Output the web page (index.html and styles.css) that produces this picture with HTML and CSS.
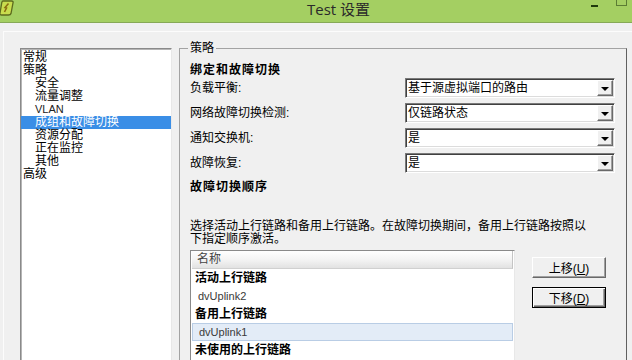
FILE: index.html
```html
<!DOCTYPE html>
<html lang="zh-CN">
<head>
    <meta charset="UTF-8">
    <meta name="viewport" content="width=device-width, initial-scale=1.0">
    <title>Test 设置</title>
    <link rel="stylesheet" href="styles.css">
</head>
<body>
    <div class="titlebar">
        <svg class="app-icon" width="14" height="16" viewBox="0 0 14 16">
            <path d="M3 1 L11.5 1 Q13.5 1 13 3 L11 13.5 Q10.5 15 8.5 15 L1.5 15 Q-0.5 15 0 13 L1.8 2.5 Q2.2 1 3 1 Z" fill="#c9dc4e" stroke="#5d6b1e" stroke-width="1.3"/>
            <path d="M4.5 12 L6.5 8 L5 7.5 L8.5 3.5" fill="none" stroke="#8a6d12" stroke-width="1.6"/>
        </svg>
        <div class="title">Test 设置</div>
        <div class="win-buttons">
            <span class="btn-min"></span>
            <span class="btn-max"></span>
        </div>
    </div>

    <div class="frame">
        <div class="content">
            <ul class="tree">
                <li>常规</li>
                <li>策略</li>
                <li class="child">安全</li>
                <li class="child">流量调整</li>
                <li class="child latin">VLAN</li>
                <li class="child selected">成组和故障切换</li>
                <li class="child">资源分配</li>
                <li class="child">正在监控</li>
                <li class="child">其他</li>
                <li>高级</li>
            </ul>

            <fieldset class="group">
                <legend>策略</legend>
                <div class="heading">绑定和故障切换</div>

                <div class="form-grid">
                    <label>负载平衡:</label>
                    <div class="combo"><span class="combo-text">基于源虚拟端口的路由</span><span class="combo-btn"></span></div>

                    <label>网络故障切换检测:</label>
                    <div class="combo"><span class="combo-text">仅链路状态</span><span class="combo-btn"></span></div>

                    <label>通知交换机:</label>
                    <div class="combo"><span class="combo-text">是</span><span class="combo-btn"></span></div>

                    <label>故障恢复:</label>
                    <div class="combo"><span class="combo-text">是</span><span class="combo-btn"></span></div>
                </div>

                <div class="heading order-heading">故障切换顺序</div>
                <p class="desc">选择活动上行链路和备用上行链路。在故障切换期间，备用上行链路按照以<br>下指定顺序激活。</p>

                <div class="order-row">
                    <div class="listview">
                        <div class="lv-header">名称</div>
                        <div class="lv-group">活动上行链路</div>
                        <div class="lv-item">dvUplink2</div>
                        <div class="lv-group">备用上行链路</div>
                        <div class="lv-item selected">dvUplink1</div>
                        <div class="lv-group">未使用的上行链路</div>
                    </div>
                    <div class="side-buttons">
                        <button>上移(<u>U</u>)</button>
                        <button class="default">下移(<u>D</u>)</button>
                    </div>
                </div>
            </fieldset>
        </div>
    </div>
</body>
</html>
```

FILE: styles.css
```css
body {
    margin: 0;
    width: 632px;
    height: 360px;
    overflow: hidden;
    background-color: #f0f0f0;
    font-family: "Liberation Sans", "Noto Sans CJK SC", sans-serif;
    font-size: 12px;
    color: #000;
}

/* title bar */
.titlebar {
    height: 22px;
    background-color: #a4cf62;
    border-bottom: 1px solid #86a956;
    display: flex;
    align-items: flex-start;
}
.app-icon {
    display: block;
    flex: none;
}
.title {
    margin-left: 293px;
    font-family: "Open Sans", "Noto Sans CJK SC", sans-serif;
    font-size: 15px;
    line-height: 18px;
    color: #2a2a2a;
}
.win-buttons {
    margin-left: auto;
    display: flex;
    align-items: flex-start;
}
.btn-min {
    width: 7px;
    height: 2px;
    margin-top: 5px;
    background-color: #1f3a0c;
}
.btn-max {
    width: 9px;
    height: 5px;
    margin-left: 18px;
    margin-right: 5px;
    border: 1px solid #5b7c33;
    border-top: none;
}

/* dialog body */
.frame {
    margin: 8px 0 0 3px;
    border-top: 1px solid #fcfcfc;
    border-left: 1px solid #fcfcfc;
    padding: 16px 0 0 16px;
}
.content {
    display: flex;
    gap: 7px;
    align-items: flex-start;
}

.tree {
    list-style: none;
    margin: 0;
    padding: 2px 0 0 0;
    width: 152px;
    height: 330px;
    box-sizing: border-box;
    background-color: #fff;
    border: 1px solid;
    border-color: #8a8a8a #e8e8e8 #e8e8e8 #8a8a8a;
    box-shadow: inset 1px 1px 0 #b5b5b5;
}
.tree li {
    line-height: 13px;
    height: 13px;
    padding-left: 2px;
    white-space: nowrap;
}
.tree li.child {
    padding-left: 14px;
}
.tree li.latin {
    font-size: 11px;
    color: #222;
}
.tree li.selected {
    background-color: #3a8ee6;
    color: #fff;
}

/* group box */
.group {
    margin: -7px 0 0 0;
    width: 448px;
    height: 340px;
    box-sizing: border-box;
    min-width: 0;
    padding: 7px 11px 0 10px;
    border: 1px solid;
    border-color: #a3a3a3 #606060 #a3a3a3 #a3a3a3;
}
.group legend {
    padding: 0 2px;
    margin-left: -2px;
    line-height: 14px;
}
.heading {
    font-weight: bold;
    letter-spacing: 1px;
    line-height: 16px;
    height: 16px;
}
.order-heading {
    margin-top: 6px;
}

.form-grid {
    display: grid;
    grid-template-columns: 1fr 210px;
    grid-auto-rows: 20px;
    row-gap: 5px;
}
.form-grid label {
    align-self: center;
    line-height: 14px;
}
.combo {
    box-sizing: border-box;
    height: 20px;
    background-color: #fff;
    border: 1px solid;
    border-color: #7a7a7a #fff #fff #7a7a7a;
    box-shadow: inset 1px 1px 0 #404040, inset -1px -1px 0 #dcdcdc;
    display: flex;
    align-items: center;
    padding-left: 2px;
}
.combo-text {
    line-height: 14px;
}
.combo-btn {
    margin-left: auto;
    margin-right: 1px;
    width: 16px;
    height: 16px;
    box-sizing: border-box;
    background-color: #f0f0f0;
    border: 1px solid;
    border-color: #fff #696969 #696969 #fff;
    box-shadow: inset -1px -1px 0 #a0a0a0;
    display: flex;
    align-items: center;
    justify-content: center;
}
.combo-btn::after {
    content: "";
    width: 0;
    height: 0;
    margin-top: 1px;
    border-left: 4px solid transparent;
    border-right: 4px solid transparent;
    border-top: 4px solid #000;
}

.desc {
    margin: 25px 0 0 0;
    line-height: 13px;
    white-space: nowrap;
}

/* failover order */
.order-row {
    margin-top: 4px;
    display: flex;
    gap: 17px;
    align-items: flex-start;
}
.listview {
    width: 325px;
    height: 130px;
    box-sizing: border-box;
    background-color: #fff;
    border: 1px solid;
    border-color: #8a8a8a #e8e8e8 #e8e8e8 #8a8a8a;
}
.lv-header {
    height: 18px;
    box-sizing: border-box;
    margin: 0 1px;
    padding-left: 5px;
    line-height: 17px;
    color: #444;
    background: linear-gradient(#ffffff, #f4f4f4 50%, #e2e2e2);
    border-bottom: 1px solid #d0d0d0;
    border-right: 1px solid #c4c4c4;
}
.lv-group {
    height: 18px;
    line-height: 18px;
    padding-left: 4px;
    font-weight: bold;
    white-space: nowrap;
}
.lv-item {
    height: 18px;
    box-sizing: border-box;
    line-height: 18px;
    padding-left: 7px;
    font-size: 11px;
    color: #3a3a3a;
}
.lv-item.selected {
    margin: 0 1px;
    padding-left: 6px;
    line-height: 16px;
    background-color: #e3ecf7;
    border: 1px solid #b9cde5;
}

.side-buttons {
    padding-top: 7px;
    display: flex;
    flex-direction: column;
    gap: 9px;
}
.side-buttons button {
    width: 74px;
    height: 21px;
    padding: 0;
    font-family: "Liberation Sans", "Noto Sans CJK SC", sans-serif;
    font-size: 12px;
    color: #000;
    background-color: #f0f0f0;
    border: 1px solid;
    border-color: #fff #696969 #696969 #fff;
    box-shadow: inset -1px -1px 0 #a0a0a0;
}
.side-buttons button.default {
    border: 1px solid #000;
    box-shadow: inset 1px 1px 0 #fff, inset -1px -1px 0 #696969, inset -2px -2px 0 #a0a0a0;
}
```
